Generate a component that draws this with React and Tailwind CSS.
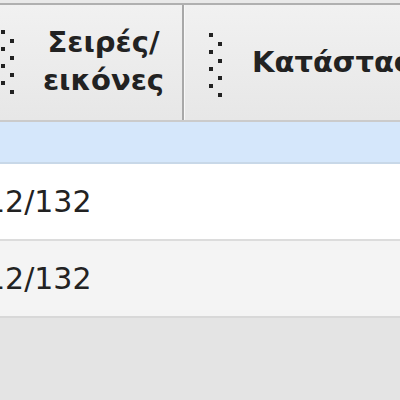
import React from 'react';

// column resize grip: two staggered columns of small dark squares
function Grip({ className = '' }) {
  const left = [0, 17, 34, 51];
  return (
    <svg width="14" height="64" viewBox="0 0 14 64" className={className}>
      {left.map((y) => (
        <rect key={'l' + y} x="0" y={y} width="4" height="4" fill="#222" />
      ))}
      {left.map((y) => (
        <rect key={'r' + y} x="9" y={y + 9} width="4" height="4" fill="#222" />
      ))}
    </svg>
  );
}

const rows = [
  { count: '12/132', bg: 'bg-white', border: 'border-[#dcdcdc]' },
  { count: '12/132', bg: 'bg-[#f4f4f4]', border: 'border-[#d8d8d8]' },
];

export default function App() {
  return (
    <div
      className="w-[400px] h-[400px] overflow-hidden bg-[#e4e4e4] text-[#222]"
      style={{ fontFamily: '"DejaVu Sans", Verdana, sans-serif' }}
    >
      <div className="w-[440px] -ml-[24px] flex flex-col">
        <div className="h-[3px] bg-[#e9e9e9]" />

        {/* header */}
        <div className="flex h-[119px] border-t-2 border-b-2 border-t-[#b0b0b0] border-b-[#cbcbcb] bg-gradient-to-b from-[#f1f1f1] to-[#e7e7e7]">
          <div className="w-[208px] flex items-center border-r-2 border-[#a8a8a8] pl-[25px]">
            <Grip className="shrink-0 -mt-[2px]" />
            <div className="flex-1 ml-[10px] text-center font-bold text-[29px] leading-[38px] -mt-[4px]">
              Σειρές/
              <br />
              εικόνες
            </div>
          </div>
          <div className="flex-1 flex items-center border-l border-[#f8f8f8] pl-[24px] whitespace-nowrap overflow-hidden">
            <Grip className="shrink-0 mt-[4px]" />
            <span className="ml-[29px] font-bold text-[29px] leading-none">Κατάσταση</span>
          </div>
        </div>

        {/* selected / filter row */}
        <div className="h-[42px] bg-[#d5e7fb] border-b-2 border-[#c8d8e8]" />

        {rows.map((r, i) => (
          <div key={i} className={`flex h-[77px] border-b-2 ${r.bg} ${r.border}`}>
            <div className="w-[208px] flex items-center pl-[10px] text-[30px]">{r.count}</div>
            <div className="flex-1" />
          </div>
        ))}
      </div>
    </div>
  );
}
